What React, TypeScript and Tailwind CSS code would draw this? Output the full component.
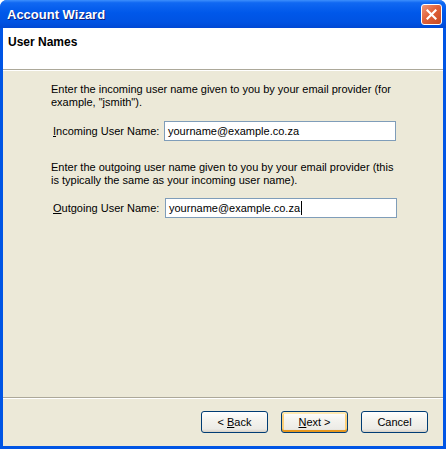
import type { ReactNode } from 'react';

type ButtonProps = {
  children: ReactNode;
  isDefault?: boolean;
};

function WizardButton({ children, isDefault = false }: ButtonProps) {
  return (
    <button
      className={`h-[22px] w-[67px] rounded-[3px] border border-[#003c74] bg-[linear-gradient(180deg,#ffffff_0%,#f4f3ee_40%,#ecebe6_85%,#d6d0c5_100%)] text-[11px] leading-none text-black ${
        isDefault
          ? 'shadow-[inset_0_2px_0_#ffe9b0,inset_0_-2px_0_#e5971f,inset_2px_0_0_#fbd07a,inset_-2px_0_0_#fbd07a]'
          : ''
      }`}
    >
      {children}
    </button>
  );
}

type FieldProps = {
  label: ReactNode;
  value: string;
  focused?: boolean;
  inputOffset: string;
};

function NameField({ label, value, focused = false, inputOffset }: FieldProps) {
  return (
    <div className="flex items-center pl-[2px]">
      <label className={`${inputOffset} shrink-0`}>{label}</label>
      <div className="flex h-[20px] w-[232px] items-center border border-[#7f9db9] bg-white pl-[3px]">
        <span>{value}</span>
        {focused && <span className="ml-px h-[14px] w-px bg-black" />}
      </div>
    </div>
  );
}

export default function App() {
  return (
    <div className="flex h-[449px] w-[446px] flex-col overflow-hidden rounded-t-[7px] bg-[#0055e5] font-['Liberation_Sans',Arial,sans-serif] text-[11px] text-black">
      {/* title bar */}
      <div className="flex h-[28px] shrink-0 items-center justify-between bg-[linear-gradient(180deg,#3d8ffc_0%,#1068f2_10%,#0058ea_45%,#0052e2_80%,#0048d4_100%)] pl-[7px] pr-[4px]">
        <span className="pt-px text-[13px] font-bold text-white [text-shadow:1px_1px_0_#0a1f7c]">
          Account Wizard
        </span>
        <div className="flex h-[21px] w-[21px] items-center justify-center rounded-[3px] border border-white bg-[linear-gradient(135deg,#f0977a_0%,#e1623b_45%,#c84a22_100%)]">
          <svg width="11" height="11" viewBox="0 0 11 11">
            <path d="M1.5 1.5 L9.5 9.5 M9.5 1.5 L1.5 9.5" stroke="white" strokeWidth="2.2" strokeLinecap="square" />
          </svg>
        </div>
      </div>

      {/* client area */}
      <div className="mx-[3px] mb-[3px] flex flex-1 flex-col bg-[#ece9d8]">
        <div className="h-[42px] shrink-0 border-b border-[#aca899] bg-white pl-[5px] pt-[5px]">
          <h1 className="text-[12px] font-bold">User Names</h1>
        </div>

        <div className="flex flex-1 flex-col border-t border-white pl-[48px] pt-[12px]">
          <p className="w-[345px] leading-[13px]">
            Enter the incoming user name given to you by your email provider (for example,
            "jsmith").
          </p>
          <div className="mt-[12px]">
            <NameField
              label={
                <>
                  <span className="underline">I</span>ncoming User Name:
                </>
              }
              value="yourname@example.co.za"
              inputOffset="w-[111px]"
            />
          </div>
          <p className="mt-[20px] w-[345px] leading-[13px]">
            Enter the outgoing user name given to you by your email provider (this is typically
            the same as your incoming user name).
          </p>
          <div className="mt-[11px]">
            <NameField
              label={
                <>
                  <span className="underline">O</span>utgoing User Name:
                </>
              }
              value="yourname@example.co.za"
              focused
              inputOffset="w-[112px]"
            />
          </div>
        </div>

        <div className="flex h-[49px] shrink-0 items-start justify-end gap-[13px] border-t border-[#aca899] pr-[15px] pt-[13px] shadow-[inset_0_1px_0_#ffffff]">
          <WizardButton>
            &lt; <span className="underline">B</span>ack
          </WizardButton>
          <WizardButton isDefault>
            <span className="underline">N</span>ext &gt;
          </WizardButton>
          <WizardButton>Cancel</WizardButton>
        </div>
      </div>
    </div>
  );
}
